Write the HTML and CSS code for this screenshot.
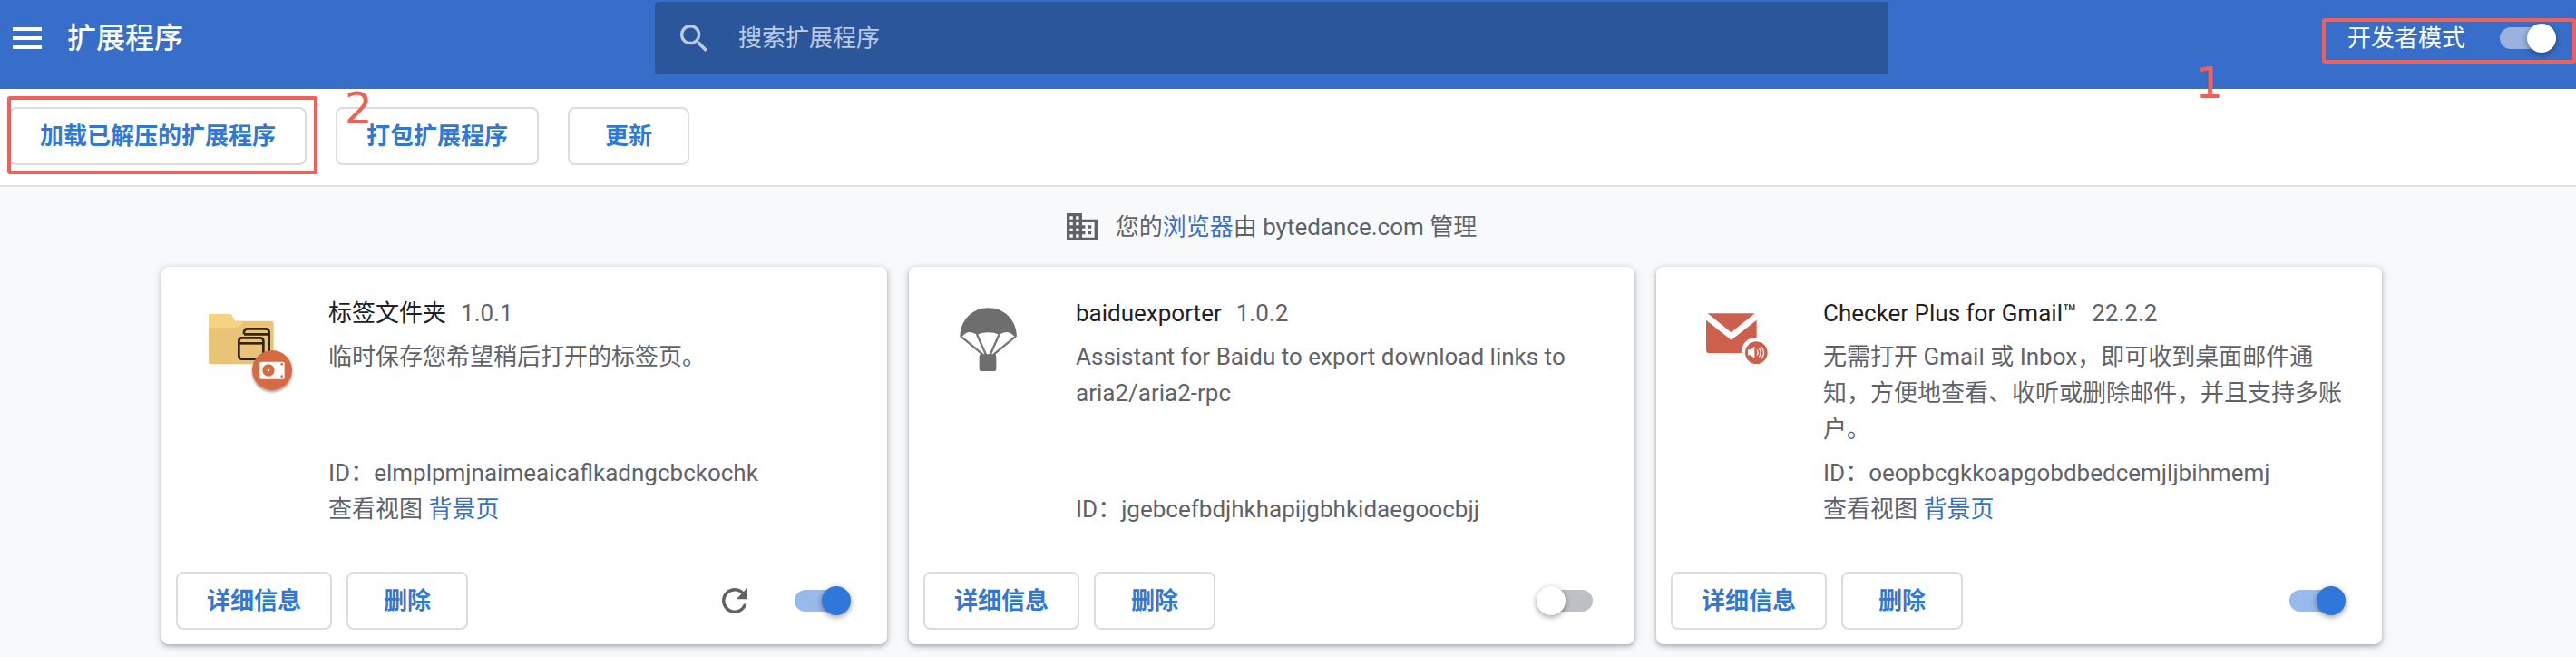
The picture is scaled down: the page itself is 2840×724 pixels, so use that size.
FILE: index.html
```html
<!DOCTYPE html>
<html lang="zh-CN">
<head>
<meta charset="utf-8">
<title>扩展程序</title>
<link rel="stylesheet" href="styles.css">
</head>
<body>
<header class="header">
  <div class="header-start">
    <button class="icon-button" type="button" aria-label="主菜单">
      <svg width="32" height="24" viewBox="0 0 32 24" fill="#fff"><path d="M0 0h32v4H0zM0 10h32v4H0zM0 20h32v4H0z"/></svg>
    </button>
    <h1 class="title">扩展程序</h1>
  </div>
  <label class="search">
    <svg width="30" height="30" viewBox="3 3 17.5 17.5" fill="#bccae4"><path d="M15.5 14h-.79l-.28-.27A6.47 6.47 0 0 0 16 9.5 6.5 6.5 0 1 0 9.5 16c1.61 0 3.09-.59 4.23-1.57l.27.28v.79l5 4.99L20.49 19l-4.99-5zm-6 0C7.01 14 5 11.99 5 9.5S7.01 5 9.5 5 14 7.01 14 9.5 11.99 14 9.5 14z"/></svg>
    <input class="search-input" type="search" placeholder="搜索扩展程序" aria-label="搜索扩展程序">
  </label>
  <div class="dev-mode">
    <label for="dev-toggle">开发者模式</label>
    <input class="toggle toggle-light" id="dev-toggle" type="checkbox" checked>
    <span class="mark mark-dev"></span>
  </div>
  <span class="step step-one">1</span>
</header>

<div class="toolbar">
  <div class="load-unpacked">
    <button class="button" type="button">加载已解压的扩展程序</button>
    <span class="mark mark-load"></span>
  </div>
  <button class="button" type="button">打包扩展程序</button>
  <button class="button" type="button">更新</button>
  <span class="step step-two">2</span>
</div>

<main class="content">
  <p class="managed">
    <svg width="34" height="30" viewBox="2 3 20 18" preserveAspectRatio="none" fill="#5f6368"><path d="M12 7V3H2v18h20V7H12zM6 19H4v-2h2v2zm0-4H4v-2h2v2zm0-4H4V9h2v2zm0-4H4V5h2v2zm4 12H8v-2h2v2zm0-4H8v-2h2v2zm0-4H8V9h2v2zm0-4H8V5h2v2zm10 12h-8v-2h2v-2h-2v-2h2v-2h-2V9h8v10zm-2-8h-2v2h2v-2zm0 4h-2v2h2v-2z"/></svg>
    <span>您的<a class="link" href="#">浏览器</a>由 bytedance.com 管理</span>
  </p>

  <div class="cards">
    <article class="card">
      <div class="card-body">
        <svg class="card-icon" width="120" height="120" viewBox="24 42 360 360">
          <defs><filter id="badge-shadow" x="-20%" y="-20%" width="140%" height="150%"><feDropShadow dx="0" dy="6" stdDeviation="5" flood-color="#000" flood-opacity=".4"/></filter></defs>
          <path d="M60 84q0-6 6-6h62q6 0 9 5l10 18h121q7 0 7 7v130q0 6-6 6H66q-6 0-6-6z" fill="#e9c377"/>
          <path d="M60 84q0-6 6-6h62q6 0 9 5l10 18h26q-4 22-22 22H60z" fill="#f4d382"/>
          <g fill="none" stroke="#30240f" stroke-width="8"><path d="M177 145v-6q0-12 12-12h59q12 0 12 12v63M177 145h81"/><rect x="160" y="157" width="81" height="70" rx="10"/><path d="M160 175h81"/></g>
          <circle cx="270" cy="264" r="66" fill="#d66a43" filter="url(#badge-shadow)"/>
          <rect x="229" y="236" width="82" height="57" rx="5" fill="#fff"/>
          <circle cx="258" cy="264" r="20" fill="#d66a43"/><circle cx="258" cy="264" r="4" fill="#fff"/>
          <circle cx="302" cy="244" r="4" fill="#d66a43"/><circle cx="302" cy="284" r="4" fill="#d66a43"/>
        </svg>
        <div class="details">
          <div class="name-row"><h2 class="name">标签文件夹</h2><span>1.0.1</span></div>
          <p class="description">临时保存您希望稍后打开的标签页。</p>
          <div class="meta">
            <div>ID：elmplpmjnaimeaicaflkadngcbckochk</div>
            <div>查看视图 <a class="link" href="#">背景页</a></div>
          </div>
        </div>
      </div>
      <div class="card-actions">
        <button class="button" type="button">详细信息</button>
        <button class="button" type="button">删除</button>
        <div class="card-controls">
          <button class="icon-button" type="button" aria-label="重新加载">
            <svg width="28" height="28" viewBox="4 4 16 16" fill="#5f6368"><path d="M17.65 6.35A7.96 7.96 0 0 0 12 4a8 8 0 1 0 7.73 10h-2.08A6 6 0 1 1 12 6c1.66 0 3.14.69 4.22 1.78L13 11h7V4l-2.35 2.35z"/></svg>
          </button>
          <input class="toggle" type="checkbox" aria-label="启用标签文件夹" checked>
        </div>
      </div>
    </article>

    <article class="card">
      <div class="card-body">
        <svg class="card-icon" width="120" height="120" viewBox="36 42 360 360">
          <path d="M85 154C86 98 126 58 179 58s93 40 94 96l-10-4q-20-22-48-4-34-14-74 0-28-18-46 4z" fill="#6e6e6e"/>
          <path d="M88 152l75 62M141 145l31 70M215 145l-31 70M269 152l-75 62" fill="none" stroke="#767676" stroke-width="7"/>
          <rect x="149" y="211" width="56" height="56" rx="7" fill="#6e6e6e"/>
        </svg>
        <div class="details">
          <div class="name-row"><h2 class="name">baiduexporter</h2><span>1.0.2</span></div>
          <p class="description">Assistant for Baidu to export download links to aria2/aria2-rpc</p>
          <div class="meta">
            <div>ID：jgebcefbdjhkhapijgbhkidaegoocbjj</div>
          </div>
        </div>
      </div>
      <div class="card-actions">
        <button class="button" type="button">详细信息</button>
        <button class="button" type="button">删除</button>
        <div class="card-controls">
          <input class="toggle" type="checkbox" aria-label="启用 baiduexporter">
        </div>
      </div>
    </article>

    <article class="card">
      <div class="card-body">
        <svg class="card-icon" width="120" height="120" viewBox="18 42 360 360">
          <path d="M68 76h156l-78 63z" fill="#cd5f4d"/>
          <path d="M63 98l83 66 84-66v58q-47 0-51 51H73q-10 0-10-10z" fill="#cd5f4d"/>
          <circle cx="229" cy="206" r="37" fill="#cd5f4d"/>
          <path d="M201 196h9l13-11v40l-13-11h-9z" fill="#fff"/>
          <path d="M231 197q7 9 0 18M238 192q11 14 0 28M246 187q15 19 0 38" fill="none" stroke="#fff" stroke-width="4"/>
        </svg>
        <div class="details">
          <div class="name-row"><h2 class="name">Checker Plus for Gmail™</h2><span>22.2.2</span></div>
          <p class="description">无需打开 Gmail 或 Inbox，即可收到桌面邮件通知，方便地查看、收听或删除邮件，并且支持多账户。</p>
          <div class="meta">
            <div>ID：oeopbcgkkoapgobdbedcemjljbihmemj</div>
            <div>查看视图 <a class="link" href="#">背景页</a></div>
          </div>
        </div>
      </div>
      <div class="card-actions">
        <button class="button" type="button">详细信息</button>
        <button class="button" type="button">删除</button>
        <div class="card-controls">
          <input class="toggle" type="checkbox" aria-label="启用 Checker Plus for Gmail" checked>
        </div>
      </div>
    </article>
  </div>
</main>
</body>
</html>
```
FILE: styles.css
```css
* {
  box-sizing: border-box;
}

body {
  margin: 0;
  background: #f8f9fa;
  color: #5f6368;
  font: 26px/40px Roboto, "Noto Sans CJK SC", sans-serif;
}

h1, h2, p {
  margin: 0;
}

button, input {
  font: inherit;
}

svg {
  display: block;
  flex: none;
}

.header {
  position: relative;
  z-index: 1;
  display: grid;
  grid-template-columns: 1fr minmax(0, 1360px) 1fr;
  align-items: center;
  padding: 2px 36px 16px 0;
  background: #376ec9;
  color: #fff;
}

.header-start {
  display: flex;
  align-items: center;
  gap: 28px;
  padding-left: 14px;
}

.icon-button {
  padding: 0;
  border: 0;
  background: none;
}

.title {
  font-size: 32px;
  font-weight: 500;
}

.search {
  display: flex;
  align-items: center;
  gap: 34px;
  height: 80px;
  padding: 0 28px;
  border-radius: 4px;
  background: #2c569b;
}

.search-input {
  flex: 1;
  padding: 0;
  border: 0;
  outline: 0;
  background: none;
  color: #fff;
}

.search-input::placeholder {
  color: #bccae4;
  opacity: 1;
}

.dev-mode {
  position: relative;
  display: flex;
  align-items: center;
  justify-self: end;
  gap: 32px;
  margin-right: -14px;
}

.toggle {
  position: relative;
  flex: none;
  width: 68px;
  height: 32px;
  margin: 0;
  appearance: none;
}

.toggle::before {
  content: "";
  position: absolute;
  top: 4px;
  left: 6px;
  width: 56px;
  height: 24px;
  border-radius: 12px;
  background: #bdc1c6;
}

.toggle::after {
  content: "";
  position: absolute;
  top: 0;
  left: 0;
  width: 32px;
  height: 32px;
  border-radius: 50%;
  background: #fff;
  box-shadow: 0 2px 6px rgba(0, 0, 0, 0.4);
}

.toggle:checked::before {
  background: #98b9eb;
}

.toggle:checked::after {
  left: 36px;
  background: #2f78d9;
}

.toggle-light:checked::before {
  background: #9bb1df;
}

.toggle-light:checked::after {
  background: #fff;
}

.mark {
  position: absolute;
  border: 4px solid #f06056;
  border-radius: 3px;
  pointer-events: none;
}

.mark-dev {
  inset: -2px -22px -8px -28px;
}

.mark-load {
  inset: -12px -12px -10px -2px;
}

.step {
  position: absolute;
  color: #f06056;
  font: 48px/48px "DejaVu Sans", sans-serif;
}

.step-one {
  top: 67px;
  right: 389px;
}

.step-two {
  top: -3px;
  left: 380px;
}

.toolbar {
  position: relative;
  display: flex;
  gap: 32px;
  padding: 20px 10px 22px;
  border-bottom: 2px solid #e0e0e0;
  background: #fff;
}

.load-unpacked {
  position: relative;
}

.button {
  display: block;
  min-width: 134px;
  height: 64px;
  padding: 0 32px;
  border: 2px solid #dadce0;
  border-radius: 8px;
  background: #fff;
  color: #2f78d9;
  font-weight: 600;
  white-space: nowrap;
}

.content {
  padding: 24px 36px 14px 0;
}

.managed {
  display: flex;
  align-items: center;
  justify-content: center;
  gap: 20px;
}

.link {
  color: #376ec9;
  text-decoration: none;
}

.cards {
  display: grid;
  grid-template-columns: repeat(3, minmax(0, 800px));
  justify-content: center;
  gap: 24px;
  margin-top: 24px;
}

.card {
  display: flex;
  flex-direction: column;
  min-height: 416px;
  border-radius: 8px;
  background: #fff;
  box-shadow: 0 2px 4px rgba(60, 64, 67, 0.3), 0 2px 8px 1px rgba(60, 64, 67, 0.18);
}

.card-body {
  display: flex;
  flex: 1;
  gap: 24px;
  padding: 31px 40px 49px;
}

.card-icon {
  margin-top: 9px;
}

.details {
  display: flex;
  flex: 1;
  flex-direction: column;
  min-width: 0;
}

.name-row {
  display: flex;
  gap: 16px;
}

.name {
  color: #202124;
  font-size: 26px;
  font-weight: 400;
}

.description {
  margin-top: 8px;
}

.meta {
  margin-top: auto;
}

.card-actions {
  display: flex;
  align-items: center;
  gap: 16px;
  padding: 0 40px 16px 16px;
}

.card-controls {
  display: flex;
  align-items: center;
  gap: 46px;
  margin-left: auto;
}
```
